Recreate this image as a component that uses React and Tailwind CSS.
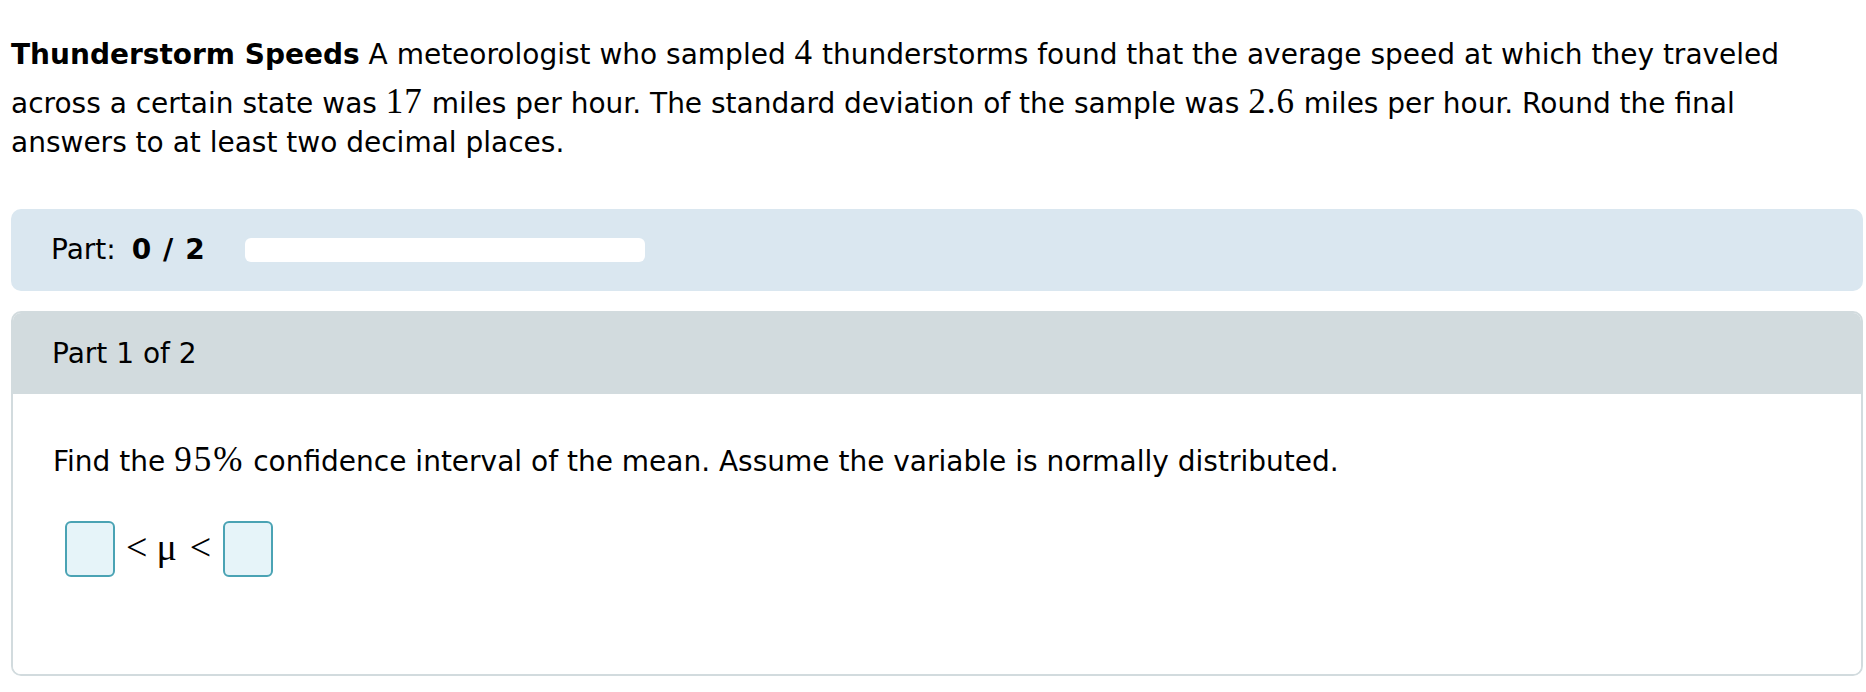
import React from "react";

// numbers set in the math font, raised a little like the rendered TeX spans
function Num({ children }) {
    return (
        <span className="inline-block pt-[10px] font-['Liberation_Serif',serif] text-[35px] leading-none tracking-[1px]">
            {children}
        </span>
    );
}

function AnswerBox() {
    return (
        <div className="w-[50px] h-[56px] rounded-[6px] border-2 border-[#4aa3b4] bg-[#e6f4f9]" />
    );
}

export default function App() {
    return (
        <div className="min-h-screen bg-white pl-[11px] pr-[3px] pt-[25px] font-['DejaVu_Sans',Verdana,sans-serif] text-[28px] text-black">
            <p className="pr-[22px] leading-[39px]">
                <b>Thunderstorm Speeds</b> A meteorologist who sampled <Num>4</Num> thunderstorms found
                that the average speed at which they traveled across a certain state was <Num>17</Num> miles
                per hour. The standard deviation of the sample was <Num>2.6</Num> miles per hour. Round the
                final answers to at least two decimal places.
            </p>

            <div className="mt-[47px] flex h-[82px] items-center rounded-[10px] bg-[#dae7f0] pl-[40px]">
                <span className="leading-none">
                    Part:{" "}
                    <b className="ml-[7px]">
                        0<span className="ml-[12px]">/</span><span className="ml-[12px]">2</span>
                    </b>
                </span>
                <div className="ml-[40px] h-[24px] w-[400px] rounded-[6px] bg-white" />
            </div>

            <div className="mt-[20px] overflow-hidden rounded-[10px] border-2 border-[#d2dbde]">
                <div className="flex h-[81px] items-center bg-[#d2dbde] pl-[39px]">
                    <span className="leading-none">Part 1 of 2</span>
                </div>
                <div className="bg-white px-[40px] pt-[48px] pb-[97px]">
                    <p className="leading-[39px]">
                        Find the{" "}
                        <span className="inline-block font-['Liberation_Serif',serif] text-[35px] leading-none tracking-[2px]">
                            95%
                        </span>{" "}
                        confidence interval of the mean. Assume the variable is normally distributed.
                    </p>
                    <div className="mt-[40px] ml-[12px] flex items-center font-['Liberation_Serif',serif] text-[38px] leading-none">
                        <AnswerBox />
                        <span className="ml-[11px] mb-[5px]">&lt;</span>
                        <span className="ml-[9px] mb-[5px]">μ</span>
                        <span className="ml-[13px] mb-[5px]">&lt;</span>
                        <div className="ml-[12px]">
                            <AnswerBox />
                        </div>
                    </div>
                </div>
            </div>
        </div>
    );
}
